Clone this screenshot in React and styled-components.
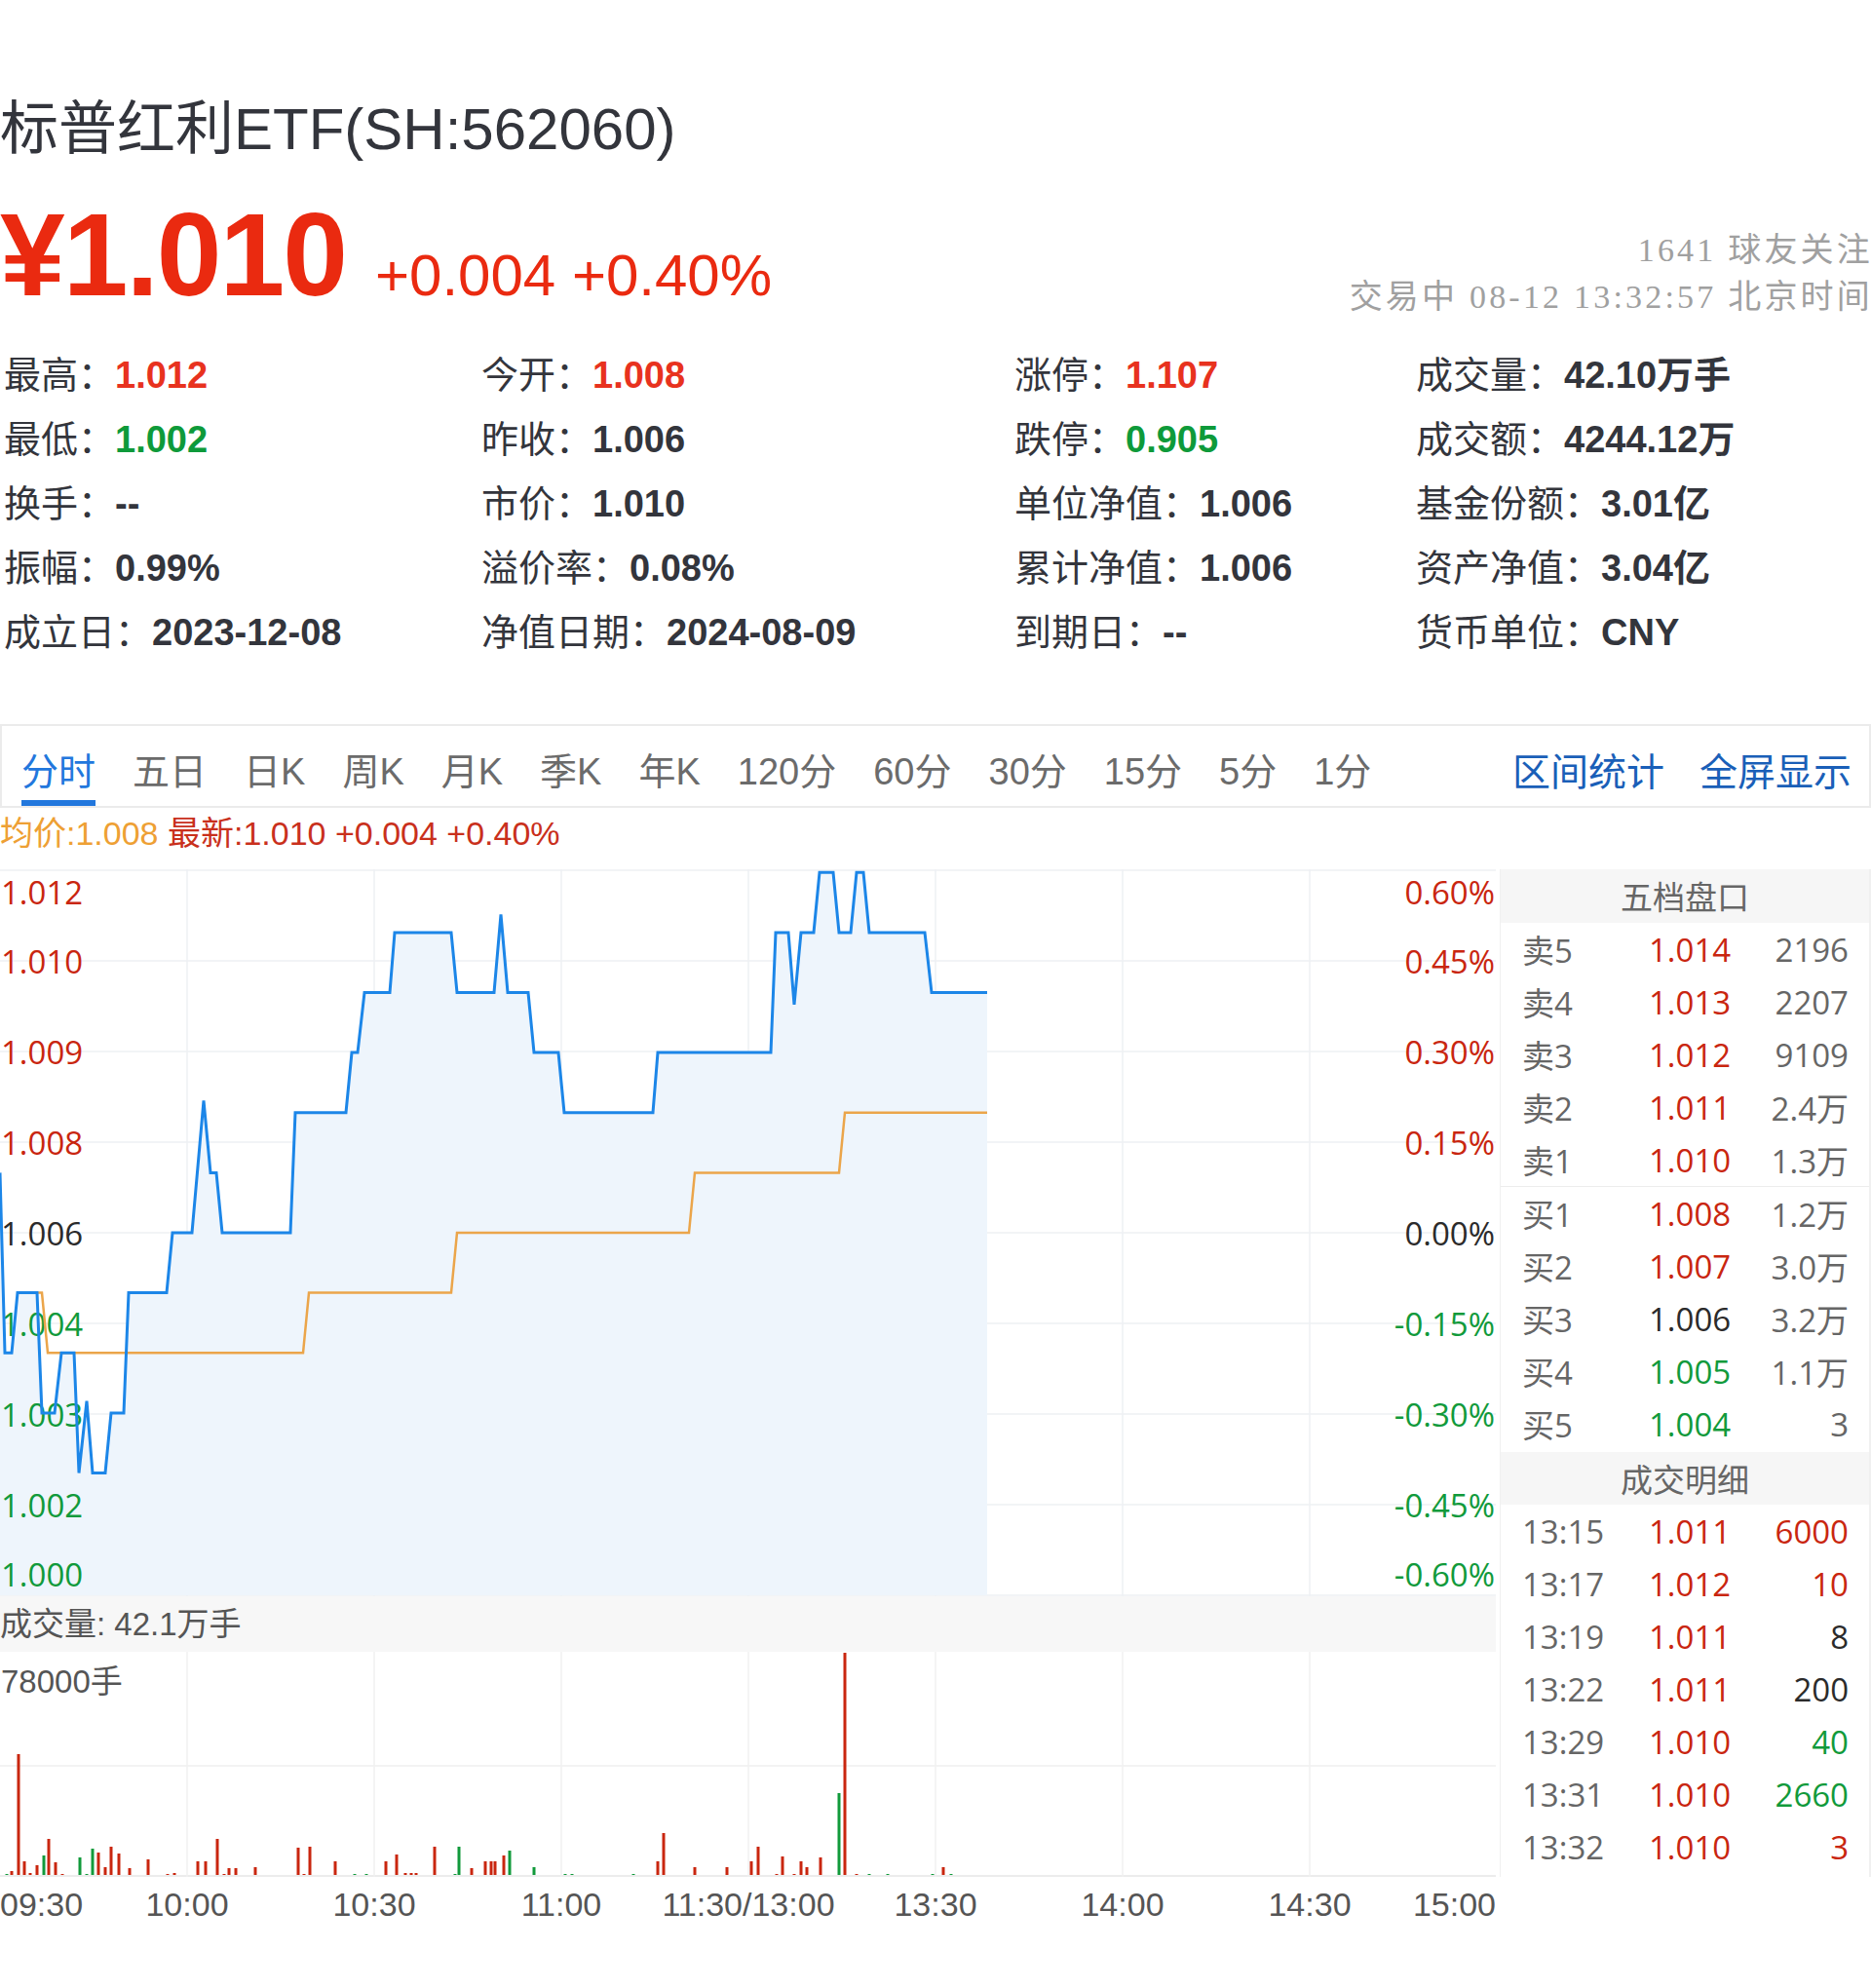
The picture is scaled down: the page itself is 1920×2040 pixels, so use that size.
import React from "react";
import styled, { createGlobalStyle } from "styled-components";

const RED = "#e8321e";
const GREEN = "#0e9a3a";
const DARK = "#33353c";
const CHART_RED = "#c9260f";
const CHART_GREEN = "#119a3b";

const GlobalStyle = createGlobalStyle`
  html, body { margin: 0; padding: 0; background: #fff; }
  body {
    font-family: "Liberation Sans", "Noto Sans CJK SC", sans-serif;
    color: ${DARK};
  }
`;

const Page = styled.div`
  width: 1920px;
  padding-top: 98px;
`;

const Title = styled.h1`
  margin: 0;
  font-size: 60px;
  font-weight: 400;
  line-height: 70px;
  color: ${DARK};
`;

const PriceRow = styled.div`
  display: flex;
  justify-content: space-between;
  align-items: flex-end;
  height: 120px;
  margin-top: 33px;
`;

const PriceMain = styled.div`
  display: flex;
  align-items: baseline;
  gap: 30px;
`;

const BigPrice = styled.span`
  font-size: 120px;
  font-weight: 700;
  line-height: 1;
  letter-spacing: -2px;
  color: #ea2a10;
`;

const Change = styled.span`
  font-size: 60px;
  color: #ea2a10;
`;

const Meta = styled.div`
  text-align: right;
  font-family: "Liberation Serif", "Noto Sans CJK SC", serif;
  font-size: 34px;
  line-height: 48px;
  letter-spacing: 3.2px;
  color: #a0a0a0;
  margin-bottom: -8px;
  margin-right: -2px;
`;

const StatGrid = styled.div`
  display: grid;
  grid-template-columns: 490px 547px 412px 1fr;
  margin-top: 31px;
  padding-left: 4px;
`;

const Stat = styled.div`
  font-size: 38px;
  line-height: 66px;
  white-space: nowrap;
  color: ${DARK};
`;

const toneColor = { up: RED, down: GREEN };

const StatValue = styled.b`
  font-weight: 700;
  color: ${({ $tone }) => toneColor[$tone] || DARK};
`;

const TabBar = styled.div`
  display: flex;
  align-items: stretch;
  height: 86px;
  box-sizing: border-box;
  border: 2px solid #ebebeb;
  margin-top: 61px;
  padding: 0 18px 0 20px;
  gap: 38px;
`;

const Tab = styled.div`
  position: relative;
  display: flex;
  align-items: center;
  padding-top: 5px;
  font-size: 38px;
  color: ${({ $active }) => ($active ? "#2277dd" : "#6b6b6b")};

  &::after {
    content: "";
    display: ${({ $active }) => ($active ? "block" : "none")};
    position: absolute;
    left: 0;
    right: 0;
    bottom: 0;
    height: 6px;
    background: #2277dd;
  }
`;

const TabLinks = styled.div`
  margin-left: auto;
  display: flex;
  align-items: center;
  gap: 36px;
  padding-top: 5px;
  font-size: 39px;
  color: #1a5fb8;
`;

const InfoLine = styled.div`
  height: 63px;
  line-height: 52px;
  font-size: 34px;
  color: #c9301c;
  white-space: pre;
`;

const Avg = styled.span`
  color: #eea034;
`;

const Main = styled.div`
  display: flex;
  gap: 4px;
`;

const ChartCol = styled.div`
  width: 1535px;
  flex: none;
`;

const ChartSvg = styled.svg`
  display: block;
  overflow: visible;
`;

const VolHead = styled.div`
  height: 57px;
  line-height: 57px;
  background: #f7f7f7;
  font-size: 33px;
  color: #555;
`;

const TimeAxis = styled.div`
  position: relative;
  height: 54px;
  font-size: 34px;
  color: #555;
`;

const TimeLabel = styled.span`
  position: absolute;
  top: 8px;
  line-height: 40px;
  white-space: nowrap;
  transform: translateX(${({ $align }) =>
    $align === "start" ? "0" : $align === "end" ? "-100%" : "-50%"});
`;

const Panel = styled.div`
  flex: 1;
  border-left: 1px solid #f0f0f0;
  border-right: 2px solid #f0f0f0;
  font-family: "Open Sans", "Noto Sans CJK SC", sans-serif;
  height: 1034px;
`;

const PanelHead = styled.div`
  height: ${({ $h }) => $h}px;
  margin-top: ${({ $gap }) => $gap || 0}px;
  line-height: ${({ $h }) => $h}px;
  text-align: center;
  background: #f6f6f6;
  font-size: 33px;
  color: #666;
  font-family: "Noto Sans CJK SC", sans-serif;
`;

const Row = styled.div`
  display: grid;
  grid-template-columns: 130px 1fr auto;
  align-items: center;
  height: 54px;
  padding: 0 21px 0 22px;
  font-size: 33px;
  color: #666;
`;

const Cell = styled.span`
  color: ${({ $c }) => $c || "#666"};
`;

const Divider = styled.div`
  height: 1px;
  background: #ececec;
`;

const stats = [
  ["最高", "1.012", "up"], ["今开", "1.008", "up"], ["涨停", "1.107", "up"], ["成交量", "42.10万手"],
  ["最低", "1.002", "down"], ["昨收", "1.006"], ["跌停", "0.905", "down"], ["成交额", "4244.12万"],
  ["换手", "--"], ["市价", "1.010"], ["单位净值", "1.006"], ["基金份额", "3.01亿"],
  ["振幅", "0.99%"], ["溢价率", "0.08%"], ["累计净值", "1.006"], ["资产净值", "3.04亿"],
  ["成立日", "2023-12-08"], ["净值日期", "2024-08-09"], ["到期日", "--"], ["货币单位", "CNY"],
];

const tabs = ["分时", "五日", "日K", "周K", "月K", "季K", "年K", "120分", "60分", "30分", "15分", "5分", "1分"];

const pricePts = [
  [0, 1.007], [5, 1.004], [12, 1.004], [18, 1.005], [38, 1.005], [43, 1.003], [56, 1.003],
  [63, 1.004], [76, 1.004], [81, 1.002], [89, 1.0032], [95, 1.002], [108, 1.002], [114, 1.003],
  [127, 1.003], [132, 1.005], [171, 1.005], [177, 1.006], [197, 1.006], [209, 1.0082], [216, 1.007],
  [222, 1.007], [228, 1.006], [298, 1.006], [303, 1.008], [355, 1.008], [361, 1.009], [367, 1.009],
  [374, 1.01], [400, 1.01], [405, 1.011], [463, 1.011], [469, 1.01], [507, 1.01], [514, 1.0113],
  [521, 1.01], [542, 1.01], [548, 1.009], [573, 1.009], [579, 1.008], [670, 1.008], [675, 1.009],
  [791, 1.009], [796, 1.011], [809, 1.011], [815, 1.0098], [822, 1.011], [835, 1.011], [841, 1.012],
  [855, 1.012], [861, 1.011], [873, 1.011], [879, 1.012], [886, 1.012], [892, 1.011], [949, 1.011],
  [956, 1.01], [1013, 1.01],
];

const avgPts = [
  [36, 1.005], [43, 1.005], [49, 1.004], [311, 1.004], [317, 1.005], [463, 1.005], [469, 1.006],
  [707, 1.006], [713, 1.007], [861, 1.007], [867, 1.008], [1013, 1.008],
];

// [x, height, up?]
const volBars = [
  [7, 1, 0], [12, 4, 1], [19, 124, 1], [25, 14, 1], [31, 2, 1], [38, 10, 1], [45, 20, 0], [50, 37, 1],
  [57, 13, 1], [64, 1, 1], [82, 18, 0], [89, 1, 0], [95, 27, 0], [101, 23, 1], [108, 8, 1], [114, 29, 1],
  [122, 22, 1], [133, 7, 1], [152, 16, 1], [172, 1, 1], [179, 2, 1], [203, 14, 1], [211, 14, 1],
  [223, 37, 1], [230, 1, 1], [235, 7, 1], [242, 7, 1], [262, 8, 1], [306, 28, 1], [312, 1, 1],
  [318, 29, 1], [344, 14, 1], [364, 1, 0], [376, 1, 0], [396, 14, 1], [407, 21, 1], [416, 2, 1],
  [422, 2, 1], [427, 2, 1], [446, 29, 1], [467, 1, 0], [471, 29, 0], [484, 7, 1], [498, 14, 1],
  [504, 14, 1], [508, 14, 1], [517, 20, 1], [523, 25, 0], [548, 8, 0], [580, 1, 0], [587, 1, 0],
  [650, 1, 0], [675, 14, 1], [681, 43, 1], [713, 8, 1], [746, 8, 1], [771, 14, 1], [778, 29, 1],
  [797, 1, 1], [803, 19, 1], [815, 1, 1], [822, 14, 1], [828, 8, 1], [842, 18, 1], [861, 84, 0],
  [867, 228, 1], [879, 1, 1], [892, 1, 0], [911, 1, 0], [957, 1, 0], [968, 8, 1], [976, 1, 0],
];

const leftLabels = ["1.012", "1.010", "1.009", "1.008", "1.006", "1.004", "1.003", "1.002", "1.000"];
const rightLabels = ["0.60%", "0.45%", "0.30%", "0.15%", "0.00%", "-0.15%", "-0.30%", "-0.45%", "-0.60%"];

const timeLabels = [
  ["09:30", 0, "start"], ["10:00", 192], ["10:30", 384], ["11:00", 576], ["11:30/13:00", 768],
  ["13:30", 960], ["14:00", 1152], ["14:30", 1344], ["15:00", 1535, "end"],
];

const book = [
  ["卖5", "1.014", CHART_RED, "2196"], ["卖4", "1.013", CHART_RED, "2207"],
  ["卖3", "1.012", CHART_RED, "9109"], ["卖2", "1.011", CHART_RED, "2.4万"],
  ["卖1", "1.010", CHART_RED, "1.3万"],
];
const bids = [
  ["买1", "1.008", CHART_RED, "1.2万"], ["买2", "1.007", CHART_RED, "3.0万"],
  ["买3", "1.006", "#2b2b2b", "3.2万"], ["买4", "1.005", CHART_GREEN, "1.1万"],
  ["买5", "1.004", CHART_GREEN, "3"],
];
const trades = [
  ["13:15", "1.011", "6000", CHART_RED], ["13:17", "1.012", "10", CHART_RED],
  ["13:19", "1.011", "8", "#2b2b2b"], ["13:22", "1.011", "200", "#2b2b2b"],
  ["13:29", "1.010", "40", CHART_GREEN], ["13:31", "1.010", "2660", CHART_GREEN],
  ["13:32", "1.010", "3", CHART_RED],
];

const CW = 1535;
const CH = 746;
const yOf = (p) => 373 - (p - 1.006) * 61630;
const toPath = (pts) =>
  pts.map(([x, p], i) => `${i ? "L" : "M"}${x},${yOf(p).toFixed(1)}`).join(" ");

const labelColor = (i) => (i < 4 ? CHART_RED : i === 4 ? "#2b2b2b" : CHART_GREEN);
const labelY = (i) => (i === 0 ? 23 : i === 8 ? 723 : 1 + i * 93);

const PriceChart = () => {
  const fill = `M0,745 ${toPath(pricePts).replace("M", "L")} L1013,745 Z`;
  return (
    <ChartSvg width={CW} height={CH} viewBox={`0 0 ${CW} ${CH}`}>
      {Array.from({ length: 9 }, (_, i) => (
        <line key={"h" + i} x1="0" x2={CW} y1={1 + i * 93} y2={1 + i * 93} stroke="#eef0f3" strokeWidth="1.5" />
      ))}
      {Array.from({ length: 7 }, (_, i) => (
        <line key={"v" + i} x1={192 * (i + 1)} x2={192 * (i + 1)} y1="0" y2={CH} stroke="#eef0f3" strokeWidth="1.5" />
      ))}
      <path d={fill} fill="#eef5fc" />
      <g fontFamily="Open Sans, sans-serif" fontSize="33" dominantBaseline="central">
        {leftLabels.map((t, i) => (
          <text key={t} x="1" y={labelY(i)} fill={labelColor(i)}>{t}</text>
        ))}
        {rightLabels.map((t, i) => (
          <text key={t} x={CW - 1} y={labelY(i)} fill={labelColor(i)} textAnchor="end">{t}</text>
        ))}
      </g>
      <path d={toPath(avgPts)} fill="none" stroke="#eba54a" strokeWidth="2.5" />
      <path d={toPath(pricePts)} fill="none" stroke="#1c86e8" strokeWidth="3" />
    </ChartSvg>
  );
};

const VolumeChart = () => (
  <ChartSvg width={CW} height="231" viewBox={`0 0 ${CW} 231`}>
    <line x1="0" x2={CW} y1="117" y2="117" stroke="#efefef" strokeWidth="1.5" />
    <line x1="0" x2={CW} y1="230" y2="230" stroke="#ececec" strokeWidth="2" />
    {Array.from({ length: 7 }, (_, i) => (
      <line key={i} x1={192 * (i + 1)} x2={192 * (i + 1)} y1="0" y2="231" stroke="#f1f1f1" strokeWidth="1.5" />
    ))}
    <text x="1" y="30" fontSize="33" fill="#555" dominantBaseline="central"
      fontFamily="Liberation Sans, Noto Sans CJK SC, sans-serif">78000手</text>
    {volBars.map(([x, h, up]) => (
      <rect key={x} x={x - 1.5} y={229 - h} width="3" height={h} fill={up ? "#c9260f" : "#119a3b"} />
    ))}
  </ChartSvg>
);

const App = () => (
  <Page>
    <GlobalStyle />
    <Title>标普红利ETF(SH:562060)</Title>
    <PriceRow>
      <PriceMain>
        <BigPrice>¥1.010</BigPrice>
        <Change>+0.004 +0.40%</Change>
      </PriceMain>
      <Meta>
        <div>1641 球友关注</div>
        <div>交易中 08-12 13:32:57 北京时间</div>
      </Meta>
    </PriceRow>

    <StatGrid>
      {stats.map(([label, value, tone]) => (
        <Stat key={label}>
          {label}：<StatValue $tone={tone}>{value}</StatValue>
        </Stat>
      ))}
    </StatGrid>

    <TabBar>
      {tabs.map((t, i) => (
        <Tab key={t} $active={i === 0}>{t}</Tab>
      ))}
      <TabLinks>
        <span>区间统计</span>
        <span>全屏显示</span>
      </TabLinks>
    </TabBar>

    <InfoLine>
      <Avg>均价:1.008</Avg> 最新:1.010 +0.004 +0.40%
    </InfoLine>

    <Main>
      <ChartCol>
        <PriceChart />
        <VolHead>成交量: 42.1万手</VolHead>
        <VolumeChart />
        <TimeAxis>
          {timeLabels.map(([t, x, align]) => (
            <TimeLabel key={t} $align={align} style={{ left: x }}>{t}</TimeLabel>
          ))}
        </TimeAxis>
      </ChartCol>

      <Panel>
        <PanelHead $h={55}>五档盘口</PanelHead>
        {book.map(([l, p, c, q]) => (
          <Row key={l}>
            <Cell>{l}</Cell>
            <Cell $c={c}>{p}</Cell>
            <Cell>{q}</Cell>
          </Row>
        ))}
        <Divider />
        {bids.map(([l, p, c, q]) => (
          <Row key={l}>
            <Cell>{l}</Cell>
            <Cell $c={c}>{p}</Cell>
            <Cell>{q}</Cell>
          </Row>
        ))}
        <PanelHead $h={54} $gap={2}>成交明细</PanelHead>
        {trades.map(([t, p, q, c]) => (
          <Row key={t}>
            <Cell>{t}</Cell>
            <Cell $c={CHART_RED}>{p}</Cell>
            <Cell $c={c}>{q}</Cell>
          </Row>
        ))}
      </Panel>
    </Main>
  </Page>
);

export default App;
